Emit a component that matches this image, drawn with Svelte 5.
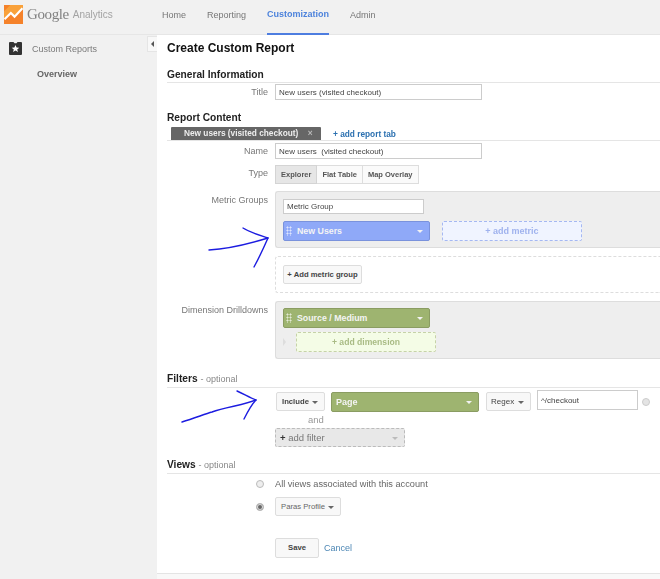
<script>
  const nav = [
    { label: 'Home' },
    { label: 'Reporting' },
    { label: 'Customization', active: true },
    { label: 'Admin' }
  ]
  const types = ['Explorer', 'Flat Table', 'Map Overlay']
</script>

<div class="page">
  <header class="topbar">
    <div class="brand">
      <svg class="logo" viewBox="0 0 18 18" width="19" height="19">
        <rect width="18" height="18" fill="#f5822a" />
        <path d="M0 6 L6 0 H18 V3 L10 10 L6.5 7 L0 13Z" fill="#f9a13a" />
        <path d="M0.5 13.5 L6.5 7.5 L10 11 L17.5 3" fill="none" stroke="#fff" stroke-width="2" />
      </svg>
      <span class="google">Google</span>
      <span class="analytics">Analytics</span>
    </div>
    <nav>
      {#each nav as item}
        <span class="nav-item" class:active={item.active}>{item.label}</span>
      {/each}
    </nav>
  </header>

  <div class="body">
    <aside>
      <div class="side-row">
        <svg viewBox="0 0 13 13" width="13" height="13">
          <path d="M1 0 H4.5 L5.5 1.2 H7.5 L8.5 0 H12 Q13 0 13 1 V12 Q13 13 12 13 H1 Q0 13 0 12 V1 Q0 0 1 0Z" fill="#333" />
          <path d="M6.5 3 L7.6 5.6 L10.3 5.7 L8.2 7.4 L9 10 L6.5 8.6 L4 10 L4.8 7.4 L2.7 5.7 L5.4 5.6Z" fill="#fff" />
        </svg>
        <span>Custom Reports</span>
      </div>
      <div class="side-sub">Overview</div>
      <div class="collapse"><i></i></div>
    </aside>

    <main>
      <h1>Create Custom Report</h1>

      <h2>General Information</h2>
      <div class="row first">
        <label for="title">Title</label>
        <input id="title" class="text" value="New users (visited checkout)" />
      </div>

      <h2 class="content-head">Report Content</h2>
      <div class="tabs">
        <span class="tab">New users (visited checkout) <b>×</b></span>
        <span class="add-tab">+ add report tab</span>
      </div>
      <div class="row name">
        <label for="name">Name</label>
        <input id="name" class="text" value="New users  (visited checkout)" />
      </div>
      <div class="row type">
        <span class="lbl">Type</span>
        <div class="seg">
          {#each types as t, i}
            <span class="seg-btn" class:on={i === 0}>{t}</span>
          {/each}
        </div>
      </div>

      <div class="row metric">
        <span class="lbl">Metric Groups</span>
        <div class="panel metric-panel">
          <input class="text group-name" value="Metric Group" />
          <div class="chips">
            <div class="chip blue"><span class="grip"></span>New Users<i class="caret"></i></div>
            <div class="add blue-add">+ add metric</div>
          </div>
        </div>
      </div>
      <div class="row add-group">
        <span class="lbl"></span>
        <div class="dashed"><span class="btn">+ Add metric group</span></div>
      </div>

      <div class="row dim">
        <span class="lbl">Dimension Drilldowns</span>
        <div class="panel dim-panel">
          <div class="chip green"><span class="grip"></span>Source / Medium<i class="caret"></i></div>
          <div class="dim-add">
            <i class="chev"></i>
            <div class="add green-add">+ add dimension</div>
          </div>
        </div>
      </div>

      <h2 class="filters-head">Filters <small>- optional</small></h2>
      <div class="filter">
        <span class="btn include">Include<i class="caret dark"></i></span>
        <div class="chip green page-chip">Page<i class="caret"></i></div>
        <span class="btn regex">Regex<i class="caret dark"></i></span>
        <input class="text value" value="^/checkout" />
        <i class="clear"></i>
      </div>
      <div class="and">and</div>
      <div class="add-filter"><span><b>+</b> add filter</span><i class="caret faint"></i></div>

      <h2 class="views-head">Views <small>- optional</small></h2>
      <div class="view-row all">
        <i class="radio"></i>
        <span>All views associated with this account</span>
      </div>
      <div class="view-row profile">
        <i class="radio checked"></i>
        <span class="btn select">Paras Profile<i class="caret dark"></i></span>
      </div>

      <div class="actions">
        <span class="btn save">Save</span>
        <span class="cancel">Cancel</span>
      </div>
      <div class="foot"></div>
    </main>
  </div>

  <!-- hand drawn annotations on top of the screenshot -->
  <svg class="scribble" viewBox="0 0 660 579" width="660" height="579">
    <g fill="none" stroke="#1c1ce0" stroke-width="1.4" stroke-linecap="round" stroke-linejoin="round">
      <path d="M209 250 C226 249 245 245 268 238" />
      <path d="M243 228 C251 233 259 235 268 238 C264 247 259 258 254 267" />
      <path d="M182 422 C195 418 205 414 212 412 C225 407 245 405 256 400" />
      <path d="M237 391 C244 394 250 398 256 400 C251 405 247 413 244 419" />
    </g>
  </svg>
</div>

<style>
  :global(body) {
    margin: 0;
    overflow: hidden;
    background: #fff;
  }

  .page {
    position: relative;
    width: 660px;
    height: 579px;
    overflow: hidden;
    font-family: "Liberation Sans", Arial, sans-serif;
    font-size: 9px;
    color: #555;
    filter: blur(0.3px);
  }

  .topbar {
    display: flex;
    height: 35px;
    background: #f1f1f1;
    border-bottom: 1px solid #e6e6e6;
    box-sizing: border-box;
  }

  .brand {
    display: flex;
    align-items: center;
    width: 162px;
    height: 28px;
    padding-left: 4px;
    box-sizing: border-box;
  }
  .logo { margin-right: 4px; }
  .google {
    font-family: "Liberation Serif", serif;
    font-size: 15px;
    letter-spacing: -0.4px;
    color: #828282;
    margin-right: 4px;
  }
  .analytics {
    font-size: 10px;
    color: #a3a3a3;
  }

  nav {
    display: flex;
    gap: 21px;
  }
  .nav-item {
    height: 35px;
    box-sizing: border-box;
    padding-top: 10px;
    color: #777;
    font-size: 9px;
  }
  .nav-item.active {
    color: #4d83dc;
    font-weight: bold;
    padding-top: 9px;
    border-bottom: 2px solid #4d7de0;
  }

  .body {
    display: flex;
    height: 544px;
  }

  aside {
    position: relative;
    width: 157px;
    flex: none;
    background: #f1f1f1;
  }
  .side-row {
    display: flex;
    align-items: center;
    gap: 10px;
    padding: 7px 0 0 9px;
    color: #7a7a7a;
  }
  .side-sub {
    margin: 14px 0 0 37px;
    font-weight: bold;
    color: #666;
  }
  .collapse {
    position: absolute;
    top: 1px;
    right: 0;
    width: 10px;
    height: 16px;
    background: #f8f8f8;
    border: 1px solid #e5e5e5;
    border-right: 0;
    box-sizing: border-box;
    display: flex;
    align-items: center;
    justify-content: center;
  }
  .collapse i {
    border: 3px solid transparent;
    border-right-color: #555;
    border-left: 0;
  }

  main {
    flex: 1;
    min-width: 0;
    background: #fff;
    padding-left: 10px;
    color: #555;
  }

  h1 {
    margin: 6px 0 0;
    font-size: 12px;
    line-height: 15px;
    color: #111;
    font-weight: bold;
  }
  h2 {
    margin: 12px 0 0;
    font-size: 10.2px;
    line-height: 13px;
    font-weight: bold;
    color: #222;
    padding-bottom: 1px;
    border-bottom: 1px solid #e5e5e5;
  }
  h2 small {
    font-size: 9px;
    font-weight: normal;
    color: #888;
  }
  .content-head {
    border-bottom: 0;
    margin-top: 11px;
  }

  .row {
    display: flex;
    align-items: flex-start;
  }
  .row label, .lbl {
    width: 101px;
    margin-right: 7px;
    flex: none;
    text-align: right;
    color: #777;
    font-size: 9px;
    line-height: 16px;
  }

  .text {
    display: block;
    box-sizing: border-box;
    width: 207px;
    height: 16px;
    padding: 0 3px;
    border: 1px solid #ccc;
    background: #fff;
    color: #444;
    font: 8px "Liberation Sans", Arial, sans-serif;
    outline: none;
  }
  .first { margin-top: 1px; }

  .tabs {
    display: flex;
    align-items: center;
    height: 13px;
    padding-left: 4px;
    margin-top: 2px;
    border-bottom: 1px solid #e5e5e5;
  }
  .tab {
    background: #666;
    color: #eee;
    font-size: 8.3px;
    font-weight: bold;
    width: 150px;
    height: 13px;
    line-height: 13px;
    box-sizing: border-box;
    padding-left: 13px;
    white-space: nowrap;
    border-radius: 1px 1px 0 0;
  }
  .tab b {
    color: #bbb;
    margin-left: 7px;
  }
  .add-tab {
    margin-left: 12px;
    color: #2b70b0;
    font-size: 8.3px;
    font-weight: bold;
  }

  .name { margin-top: 2px; }
  .type { margin-top: 6px; }
  .type .lbl { line-height: 16px; }

  .seg {
    display: flex;
    height: 19px;
  }
  .seg-btn {
    box-sizing: border-box;
    height: 19px;
    line-height: 17px;
    padding: 0 5px;
    border: 1px solid #ddd;
    border-left-width: 0;
    font-size: 7.5px;
    font-weight: bold;
    color: #555;
    background: #fafafa;
  }
  .seg-btn.on {
    border-left-width: 1px;
    background: #e6e6e6;
    border-color: #d4d4d4;
  }

  .metric { margin-top: 7px; }
  .metric .lbl, .dim .lbl { padding-top: 1px; }

  .panel {
    flex: 1;
    background: #eee;
    border: 1px solid #ddd;
    border-right: 0;
    border-radius: 3px 0 0 3px;
    box-sizing: border-box;
    padding-left: 7px;
  }
  .metric-panel {
    height: 57px;
    padding-top: 7px;
  }
  .group-name {
    width: 141px;
    height: 15px;
  }
  .chips {
    display: flex;
    gap: 12px;
    margin-top: 7px;
  }

  .chip {
    position: relative;
    box-sizing: border-box;
    width: 147px;
    height: 20px;
    line-height: 18px;
    padding-left: 13px;
    border: 1px solid;
    border-radius: 2px;
    color: #f4f4f4;
    font-size: 8.8px;
    font-weight: bold;
  }
  .chip.blue {
    background: #8fa9f8;
    border-color: #7a92dc;
  }
  .chip.green {
    background: #9eb470;
    border-color: #8a9c62;
  }
  .grip {
    position: absolute;
    left: 2px;
    top: 4px;
    width: 6px;
    height: 10px;
    background-image: radial-gradient(circle, rgba(255,255,255,.7) 45%, transparent 50%);
    background-size: 3px 3px;
  }

  .caret {
    position: absolute;
    right: 6px;
    top: 8px;
    border: 3px solid transparent;
    border-top-color: #f2f2f2;
    border-bottom: 0;
  }
  .caret.dark { border-top-color: #666; }
  .caret.faint { border-top-color: #bbb; }

  .add {
    box-sizing: border-box;
    width: 140px;
    height: 20px;
    line-height: 18px;
    text-align: center;
    border-radius: 2px;
    font-size: 9px;
    font-weight: bold;
  }
  .blue-add {
    background: #f0f4ff;
    border: 1px dashed #a5b8f2;
    color: #9fb2ee;
  }
  .green-add {
    background: #f4fce6;
    border: 1px dashed #c6d2a8;
    color: #a9bb85;
    font-size: 8.6px;
  }

  .add-group { margin-top: 8px; }
  .dashed {
    flex: 1;
    box-sizing: border-box;
    height: 37px;
    padding: 8px 0 0 7px;
    border: 1px dashed #ddd;
    border-right: 0;
    border-radius: 3px 0 0 3px;
  }

  .btn {
    position: relative;
    display: inline-block;
    box-sizing: border-box;
    height: 19px;
    line-height: 17px;
    border: 1px solid #ddd;
    border-radius: 2px;
    background: #f8f8f8;
    color: #444;
    font-size: 7.7px;
    font-weight: bold;
    white-space: nowrap;
  }
  .dashed .btn {
    width: 79px;
    text-align: center;
  }

  .dim { margin-top: 8px; }
  .dim-panel {
    height: 58px;
    padding-top: 6px;
  }
  .dim-add {
    display: flex;
    align-items: center;
    margin-top: 4px;
  }
  .chev {
    width: 13px;
    flex: none;
    height: 8px;
    box-sizing: border-box;
    border-left: 3px solid #ddd;
    border-top: 4px solid transparent;
    border-bottom: 4px solid transparent;
  }

  .filters-head { margin-top: 13px; }

  .filter {
    position: relative;
    display: flex;
    align-items: flex-start;
    padding: 4px 0 0 109px;
  }
  .include {
    width: 49px;
    padding-left: 5px;
    margin-right: 6px;
  }
  .page-chip {
    width: 148px;
    padding-left: 4px;
    margin-right: 7px;
    font-size: 9px;
  }
  .regex {
    width: 45px;
    padding-left: 4px;
    margin-right: 6px;
    font-weight: normal;
    font-size: 8px;
  }
  .value {
    width: 101px;
    height: 20px;
    margin: -2px 0 0;
  }
  .clear {
    box-sizing: border-box;
    width: 8px;
    height: 8px;
    margin: 6px 0 0 4px;
    border-radius: 50%;
    background: #e4e4e4;
    border: 1px solid #ccc;
  }

  .and {
    margin: 1px 0 0 141px;
    line-height: 14px;
    color: #999;
    font-size: 9.5px;
  }
  .add-filter {
    position: relative;
    box-sizing: border-box;
    width: 130px;
    height: 19px;
    line-height: 17px;
    margin: 1px 0 0 108px;
    padding-left: 4px;
    background: #e8e8e8;
    border: 1px dashed #bbb;
    border-radius: 2px;
    color: #777;
    font-size: 9.5px;
  }
  .add-filter b { color: #333; }

  .views-head { margin-top: 11px; }

  .view-row {
    display: flex;
    align-items: center;
    padding-left: 89px;
  }
  .view-row.all {
    margin-top: 3px;
    line-height: 14px;
    color: #666;
    font-size: 9.2px;
  }
  .view-row.profile { margin-top: 6px; }
  .radio {
    box-sizing: border-box;
    width: 8px;
    height: 8px;
    margin-right: 11px;
    border-radius: 50%;
    border: 1px solid #bbb;
    background: #eee;
  }
  .radio.checked {
    background: #666;
    box-shadow: inset 0 0 0 1px #ddd;
  }
  .select {
    width: 66px;
    padding-left: 5px;
    font-weight: normal;
    color: #666;
  }

  .actions {
    display: flex;
    align-items: flex-end;
    margin: 22px 0 0 108px;
    height: 20px;
  }
  .save {
    width: 44px;
    height: 20px;
    text-align: center;
    line-height: 18px;
    margin-right: 5px;
  }
  .cancel {
    color: #4d87b5;
    font-size: 9px;
    line-height: 19px;
  }

  .foot {
    margin: 15px 0 0 -10px;
    height: 8px;
    background: #f8f8f8;
    border-top: 1px solid #e4e4e4;
  }

  .scribble {
    position: absolute;
    left: 0;
    top: 0;
    pointer-events: none;
  }
</style>
